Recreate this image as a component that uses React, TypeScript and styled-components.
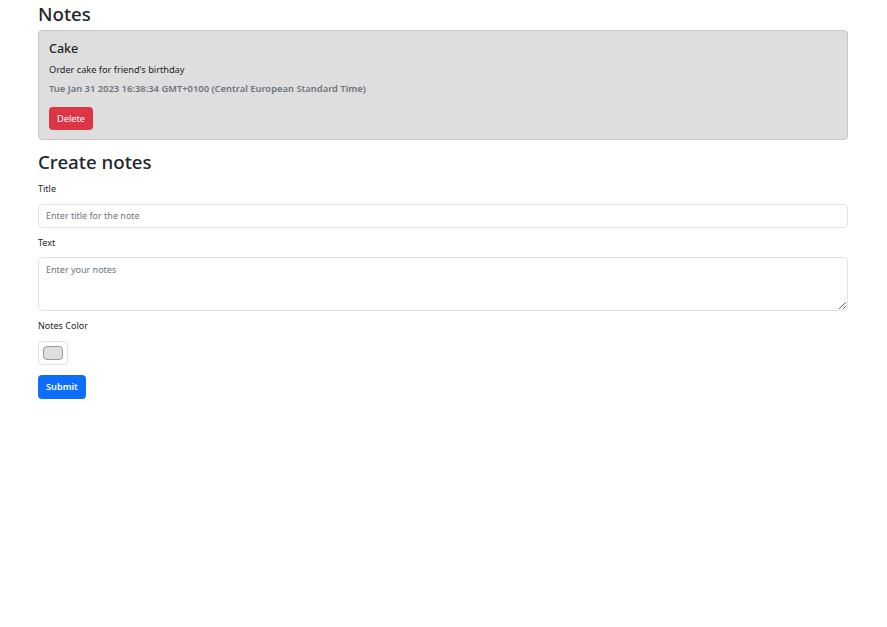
import React from 'react';
import styled, { createGlobalStyle } from 'styled-components';

const GlobalStyle = createGlobalStyle`
  body {
    margin: 0;
    background: #fff;
    color: #212529;
    font-family: "Noto Sans", "Open Sans", sans-serif;
    font-size: 10px;
    line-height: 1.5;
  }
  * { box-sizing: border-box; }
`

const Page = styled.div`
  width: 810px;
  margin-left: 38px;
  padding-top: 3px;
  display: flex;
  flex-direction: column;
`
const Heading = styled.h2<{ $top?: number; $bottom?: number }>`
  margin: ${(p) => p.$top || 0}px 0 ${(p) => p.$bottom || 5}px;
  font-size: 18.7px;
  font-weight: 500;
  line-height: 1.2;
`
const Card = styled.div`
  background: #dedede;
  border: 1px solid #c6c6c6;
  border-radius: 4px;
  padding: 10px 10px 9px;
  display: flex;
  flex-direction: column;
  align-items: flex-start;
`
const CardTitle = styled.h5`
  margin: 0 0 5px;
  font-size: 12.5px;
  font-weight: 500;
  line-height: 1.3;
`
const CardText = styled.p`
  margin: 0 0 6px;
  font-size: 9.2px;
  line-height: 1.5;
`
const CardDate = styled.h6`
  margin: 0 0 10px;
  font-size: 9.4px;
  font-weight: 600;
  color: #6c757d;
  line-height: 1.5;
`
const Button = styled.button<{ $bg: string; $weight?: number; $top?: number }>`
  background: ${(p) => p.$bg};
  color: #fff;
  border: none;
  border-radius: 4px;
  font-family: inherit;
  font-size: 9.2px;
  font-weight: ${(p) => p.$weight || 400};
  height: ${(p) => (p.$top ? 24 : 23)}px;
  margin-top: ${(p) => p.$top || 0}px;
  padding: 0 8px;
  cursor: pointer;
`
const Form = styled.form`
  display: flex;
  flex-direction: column;
  align-items: flex-start;
`
const Label = styled.label`
  font-size: 9px;
  margin-bottom: 8px;
  line-height: 1.5;
`
const Field = styled.div`
  display: flex;
  flex-direction: column;
  align-self: stretch;
  margin-bottom: 8px;
`
const Input = styled.input`
  height: 24px;
  border: 1px solid #dee2e6;
  border-radius: 4px;
  padding: 0 7px;
  font-family: inherit;
  font-size: 9px;
  color: #212529;
  &::placeholder { color: #6c757d; }
`
const TextArea = styled.textarea`
  height: 54px;
  border: 1px solid #dee2e6;
  border-radius: 4px;
  padding: 5px 7px;
  font-family: inherit;
  font-size: 9px;
  &::placeholder { color: #6c757d; }
`
const ColorInput = styled.input`
  width: 30px;
  height: 24px;
  padding: 4px;
  border: 1px solid #dee2e6;
  border-radius: 4px;
  background: #fff;
  &::-webkit-color-swatch-wrapper { padding: 0; }
  &::-webkit-color-swatch {
    border: 1px solid #999;
    border-radius: 4px;
  }
`

const App = () => {
  return (
    <>
      <GlobalStyle />
      <Page>
        <Heading>Notes</Heading>
        <Card>
          <CardTitle>Cake</CardTitle>
          <CardText>Order cake for friend's birthday</CardText>
          <CardDate>Tue Jan 31 2023 16:38:34 GMT+0100 (Central European Standard Time)</CardDate>
          <Button $bg="#dc3545" type="button">Delete</Button>
        </Card>

        <Heading $top={11} $bottom={9}>Create notes</Heading>
        <Form onSubmit={(e) => e.preventDefault()}>
          <Field>
            <Label>Title</Label>
            <Input placeholder="Enter title for the note" />
          </Field>
          <Field>
            <Label>Text</Label>
            <TextArea placeholder="Enter your notes" />
          </Field>
          <Field>
            <Label>Notes Color</Label>
            <ColorInput type="color" defaultValue="#dedede" />
          </Field>
          <Button $bg="#0d6efd" $weight={600} $top={2} type="submit">Submit</Button>
        </Form>
      </Page>
    </>
  );
};

export default App;
